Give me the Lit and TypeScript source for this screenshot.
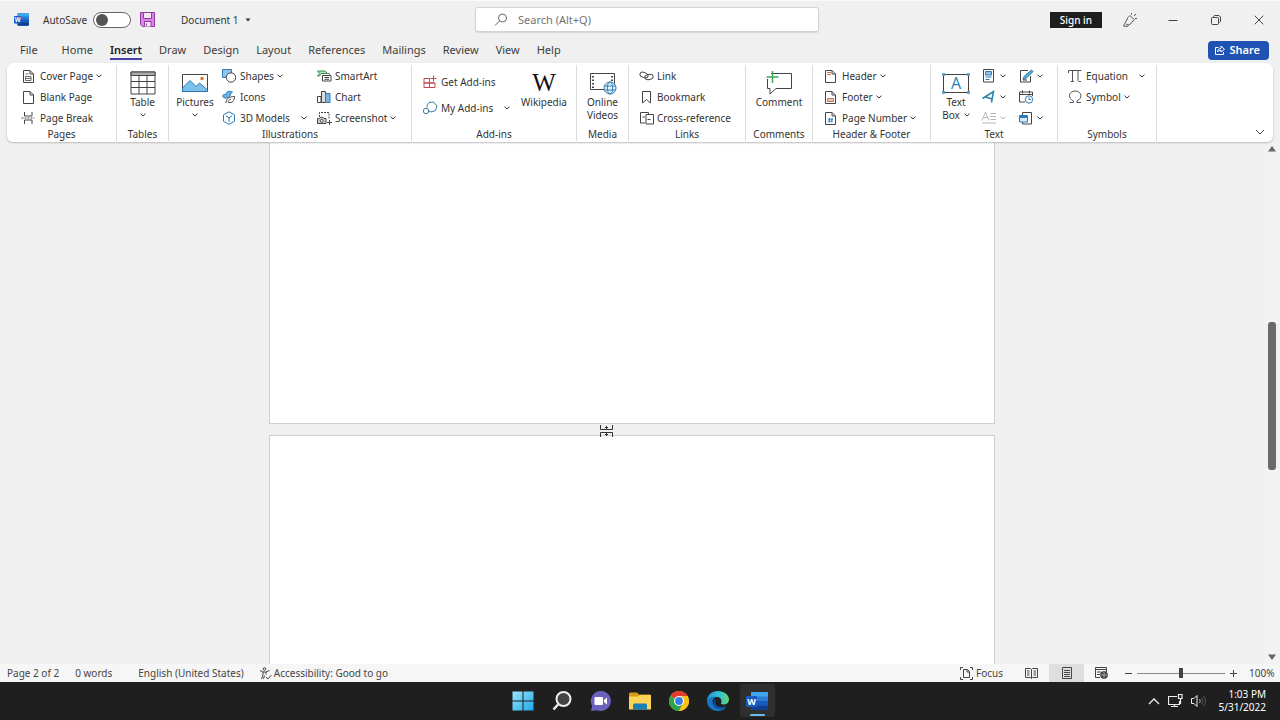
import { LitElement, html, css, svg, nothing, TemplateResult } from "lit";
import { customElement, state } from "lit/decorators.js";

type Art = TemplateResult<2>;

const INK = "#444";
const BLUE = "#2b7cb8";

const icon = (w: number, h: number, art: Art) =>
  html`<svg width=${w} height=${h} viewBox="0 0 ${w} ${h}" fill="none" stroke=${INK} aria-hidden="true">${art}</svg>`;

const sheet = svg`<path d="M2.500 2.500h6.500l3.500 3.500v8.500h-10z M9 2.500v3.500h3.500" fill="#fff"/>`;

const art = {
  coverPage: icon(16, 16, svg`${sheet}<path d="M4.500 6h3M4.500 8.500h5.500v4h-5.500zM4.500 10.500h5.500" stroke-width=".8"/>`),
  blankPage: icon(16, 16, sheet),
  pageBreak: icon(16, 16, svg`<path d="M3.500 2v4h7.500v-4M3.500 14v-4h7.500v4"/><path d="M.5 8h13" stroke-dasharray="2 1"/>`),
  shapes: icon(16, 16, svg`<path d="M1.500 1.500h9v8h-9z" fill="#8fc3ea" stroke=${BLUE}/><circle cx="10" cy="9.500" r="4.700" fill="#fff"/>`),
  icons: icon(16, 16, svg`<path d="M2 8c-1-2 1-3 3-2.500C5 3.500 7 1.500 9 2.500l2.500.5-1.800 1.500C10 7 7.500 9 5 9 3.500 9 2.300 8.700 2 8z" fill="#6eb2e4" stroke=${BLUE}/><path d="M5 14c0-4 3-6.500 8.500-6.500C13.500 12 11 14 8 13.500 6.500 13.300 7 11.500 10 10" fill="#fff"/>`),
  models: icon(16, 16, svg`<path d="M8 1.800l5.500 3v6.500L8 14.300l-5.500-3V4.800z" stroke=${BLUE} fill="#fff"/><path d="M5 6l3 1.800L11 6M8 7.800v4" stroke=${BLUE}/>`),
  smartArt: icon(16, 16, svg`<path d="M1.500 3h7.500l2.500 2.500H5L3.500 8H1.500l2-2.500z" fill="#b8e3c4" stroke="#2e9150"/><path d="M6.500 7.500h8.500v5.500H6.500zM8.500 9.500h4.500M8.500 11.300h4.500" fill="#fff"/><path d="M9 5.500h4.500v2" stroke="#777"/>`),
  chart: icon(16, 16, svg`<path d="M1.500 7.500h3.500v6H1.500z" fill="#fff"/><path d="M5.500 2.500h4v11h-4z" fill="#ddd"/><path d="M9.500 4.500H14v9H9.500z" fill="#7bb6e5" stroke=${BLUE}/>`),
  screenshot: icon(16, 16, svg`<path d="M3.500 7V2.500h9.500v7" stroke-dasharray="2 1"/><path d="M1.500 8.500h2l1-1.200h2.500l1 1.200h2v5h-8.500z" fill="#ccc"/><circle cx="5.700" cy="10.800" r="1.400" fill="#fff"/><path d="M13.500 10v5M11 12.500h5"/>`),
  getAddins: icon(16, 16, svg`<path d="M2 4.500h5.500V9H2zM2 9h5.500v4.500H2zM7.500 9H13v4.500H7.500zM7.500 4.500V9H13M11.500 1.500v6M8.500 4.500h6" stroke="#c2474f"/>`),
  myAddins: icon(16, 16, svg`<path d="M7 2.500l4.500-.5 3.500 4-1.500 4.500-4.500 1.500-2-1M7 2.500L5 5.500v2" stroke="#3b7f9c"/><circle cx="4" cy="11" r="2.700" stroke="#3b7f9c"/>`),
  link: icon(16, 16, svg`<ellipse cx="6" cy="7" rx="4.200" ry="2.500" transform="rotate(20 6 7)"/><ellipse cx="11" cy="9" rx="4.200" ry="2.500" transform="rotate(-10 11 9)"/>`),
  bookmark: icon(16, 16, svg`<path d="M4.500 2.500h8v11.500l-4-3.500-4 3.500z" fill="#fff"/>`),
  crossRef: icon(16, 16, svg`<path d="M7 13H2.500V2.500h8V4M4.500 7H7"/><path d="M8 4.500h7.500v9.500H8zM9.500 9.500h3" fill="#fff"/>`),
  header: icon(16, 16, svg`${sheet}<path d="M4 4.500h4M4 6.500h4" stroke="#c4785a"/>`),
  footer: icon(16, 16, svg`${sheet}<path d="M4.500 9.500h6v3h-6z" fill="#f0c4b2" stroke="#c4785a"/>`),
  pageNumber: icon(16, 16, svg`${sheet}<path d="M6.700 8l-.500 4.500M9.200 8l-.500 4.500M5 9.300h5M4.700 11.200h5" stroke=${BLUE} stroke-width=".9"/>`),
  quickParts: icon(16, 16, svg`<path d="M2.500 1.500h10v12.500h-10z" fill="#fff"/><path d="M4.500 3.500h6v3.500h-6z" fill="#8fc3ea" stroke=${BLUE}/><path d="M4.500 9h6M4.500 11.500h4" stroke=${BLUE}/>`),
  wordArt: icon(16, 16, svg`<path d="M1.500 9.500L12.500 2.500 10.500 13.500M4.500 8l6.500 2" stroke="#2582a8" stroke-width="1.500"/>`),
  dropCap: icon(16, 16, svg`<path d="M1 10.500L4.500 2l3.500 8.500M2.500 7.500h4M9.500 3.500H15M9.500 6.500H15M9.500 9.500H15M1 13h14" stroke="#b5b5b5"/>`),
  signature: icon(16, 16, svg`<path d="M10 2.500H2.500v11.500h10V8" fill="#fff"/><path d="M5 11.500l1-3L13.500 2l1.500 1.500L8 10.500z" fill="#5ba8d6" stroke="#287a9f"/><path d="M5 12h4"/>`),
  dateTime: icon(16, 16, svg`<path d="M7 13H1.500V3h13v4M1.500 5.500h13M4.500 1.500v3M11.500 1.500v3"/><circle cx="11" cy="10.500" r="3.700" stroke=${BLUE} fill="#fff"/><path d="M11 8.500v2h2" stroke=${BLUE}/>`),
  object: icon(16, 16, svg`<path d="M4.500 5V2.500h9v11.500h-9V12"/><path d="M1.500 5.500h8v6.500h-8z" stroke=${BLUE} fill="#d5e9f8"/><path d="M2 7h7.500" stroke=${BLUE} stroke-width="2"/>`),
  equation: icon(16, 16, svg`<path d="M1.500 5V2.500h13M5.500 2.500v11M3.500 13.500h3.500M11 2.500v10q0 1.500 3 1" stroke="#555"/>`),
  symbol: icon(16, 16, svg`<path d="M2.500 13.500h4v-1.500C3.500 10.500 2.500 8.500 2.500 6.700 2.500 4 5 2 8.200 2s5.700 2 5.700 4.700c0 1.800-1 3.800-4 5.300v1.500h4" stroke="#555"/>`),

  table: icon(26, 24, svg`<path d="M1 1h24v22H1z" fill="#fff"/><path d="M1 1h24v3.500H1z" fill="#aaa"/><path d="M1 10.500h24M1 16.500h24M9 4.500v18.500M17 4.500v18.500"/>`),
  pictures: icon(26, 20, svg`<path d="M.5 1.500h25v17H.5z" fill="#fff"/><path d="M.5 15L8 7.500l6 6 3.500-3.500 8 7v1.500H.5z" fill="#7cc0ec" stroke="#2a78ad"/><circle cx="20" cy="5.500" r="1.700" fill="#dd6b3c" stroke="none"/>`),
  wikipedia: html`<svg width="30" height="30" viewBox="0 0 30 30" aria-hidden="true"><text class="wiki" x="15" y="23" text-anchor="middle">W</text></svg>`,
  video: icon(28, 24, svg`<path d="M1.500 2.500h24v16h-24z" fill="#fff"/><path d="M4 5v12M23 5v5" stroke-width="2" stroke-dasharray="1.500 2"/><circle cx="21" cy="17" r="6" fill="#e8f4fc" stroke=${BLUE}/><ellipse cx="21" cy="17" rx="2.700" ry="6" stroke=${BLUE}/><path d="M15.500 15h11M15.500 19h11" stroke=${BLUE}/>`),
  comment: icon(28, 26, svg`<path d="M6 3.500h20.500v15H11l-6 5.500v-5.500H2.500V9" fill="#fff"/><path d="M7.500 1v12M1.500 7h12" stroke="#3fa65c" stroke-width="1.500"/>`),
  textBox: html`<svg width="28" height="22" viewBox="0 0 28 22" fill="none" stroke=${INK} aria-hidden="true"><path d="M1.500 2.500h25v18h-25z" fill="#fff"/><g fill="#7ab8df" stroke="#377fab" stroke-width=".7"><path d="M.5 1.500h2v2h-2zM25.500 1.500h2v2h-2zM.5 19.500h2v2h-2zM25.500 19.500h2v2h-2z"/></g><text class="boxA" x="14" y="17" text-anchor="middle">A</text></svg>`,
};

const caret = html`<svg class="caret" width="6" height="4" viewBox="0 0 6 4" fill="none" stroke="currentColor" aria-hidden="true"><path d="M.5.700L3 3 5.500.700"/></svg>`;

const wordLogo = (s: number) => html`<svg width=${s} height=${s} viewBox="0 0 22 22" aria-hidden="true">
  <rect x="5" y="2" width="17" height="18" rx="1.500" fill="#2b7cd3"/>
  <path d="M5 2h17v4.500H5z" fill="#41a5ee"/><path d="M5 11h17v4.500H5z" fill="#185abd"/><path d="M5 15.500h17v3.500l-1 1H6l-1-1z" fill="#103f91"/>
  <rect x="0" y="6" width="11" height="11" rx="1" fill="#185abd"/>
  <text class="logoW" x="5.500" y="14.500" text-anchor="middle">W</text></svg>`;

type Caret = "" | "near" | "far";
const row = (glyph: unknown, label: string, c: Caret = "") =>
  html`<button class="row"><span class="glyph">${glyph}</span><span>${label}</span>${c ? html`<span class="drop ${c}">${caret}</span>` : nothing}</button>`;
const mini = (glyph: unknown, label: string, c = true, off = false) =>
  html`<button class="mini" aria-label=${label} ?disabled=${off}><span class="glyph">${glyph}</span>${c ? caret : nothing}</button>`;
const big = (glyph: unknown, label: unknown, below = false) =>
  html`<button class="big"><span class="bigGlyph">${glyph}</span><span class="bigLabel">${label}</span>${below ? html`<span class="below">${caret}</span>` : nothing}</button>`;
const group = (name: string, cls: string, body: unknown) =>
  html`<section class="group ${cls}" aria-label=${name}><div class="body">${body}</div><div class="name">${name}</div></section>`;

const TABS = ["File", "Home", "Insert", "Draw", "Design", "Layout", "References", "Mailings", "Review", "View", "Help"];

@customElement("app-root")
export class AppRoot extends LitElement {
  @state() private tab = "Insert";

  static styles = css`
    :host {
      display: flex; flex-direction: column; height: 100vh; overflow: hidden;
      background: #f0f0f0; color: #333;
      font: 10px/14px "Noto Sans", "Open Sans", sans-serif;
    }
    * { box-sizing: border-box; }
    button, input { font: inherit; color: inherit; margin: 0; padding: 0; border: 0; background: none; }
    button { display: flex; align-items: center; white-space: nowrap; }
    svg { display: block; flex: none; }
    .logoW { font: bold 9px "Open Sans", sans-serif; fill: #fff; }
    .wiki { font: 25px "Liberation Serif", serif; fill: #111; stroke: none; }
    .boxA { font: 16px "Open Sans", sans-serif; fill: #2582b5; stroke: none; }

    .title {
      display: grid; grid-template-columns: minmax(0, 1fr) 344px minmax(0, 1fr);
      align-items: center; height: 38px; padding-left: 14px; border-top: 1px solid #fafafa;
    }
    .titleLeft { display: flex; align-items: center; }
    .auto { display: flex; align-items: center; gap: 6px; margin: 0 9px 0 14px; }
    .toggle {
      appearance: none; width: 38px; height: 16px; border: 1px solid #666; border-radius: 8px; background: #fff;
      display: flex; align-items: center; padding-left: 2px;
    }
    .toggle::before { content: ""; width: 12px; height: 12px; border-radius: 50%; background: #555; }
    .docName { gap: 6px; margin-left: 26px; }
    .search {
      display: flex; align-items: center; gap: 10px; height: 25px; padding-left: 18px;
      background: #fff; border: 1px solid #d2d2d2; border-radius: 3px; box-shadow: 0 1px 1px #d8d8d8;
    }
    .search input { flex: 1; min-width: 0; outline: 0; font-size: 11px; }
    .search input::placeholder { color: #737373; opacity: 1; }
    .titleRight { display: flex; justify-content: flex-end; align-items: center; }
    .signIn { height: 16px; padding: 0 10px; margin-right: 6px; background: #1d1d1d; color: #fff; font-weight: 500; }
    .win { width: 43px; height: 30px; justify-content: center; }

    .tabs { display: flex; align-items: center; gap: 1px; height: 24px; padding: 0 11px 0 12px; }
    .tab { position: relative; height: 24px; padding: 0 8px; font-size: 11px; color: #3d3d3d; }
    .tab:first-child { margin-right: 7px; }
    .tab.on { font-weight: 600; color: #222; }
    .tab.on::after { content: ""; position: absolute; left: 8px; right: 8px; bottom: 2px; height: 2px; background: #4740a8; }
    .share { height: 19px; gap: 5px; padding: 0 9px 0 7px; margin-left: auto; background: #2052b3; color: #fff; border-radius: 4px; font-size: 11px; font-weight: 600; }

    .ribbon {
      position: relative; z-index: 1; display: flex; height: 79px; margin: 1px 7px 0; padding: 2px 0 1px;
      background: #fff; border-radius: 6px; box-shadow: 0 1px 2px #bbb;
    }
    .group { display: flex; flex-direction: column; border-right: 1px solid #dcdcdc; flex: none; }
    .body { display: flex; height: 63px; }
    .name { height: 13px; line-height: 13px; text-align: center; }
    .pages { width: 110px; } .pages .body { padding-left: 14px; }
    .tables, .media { width: 52px; }
    .illus { width: 243px; }
    .addins { width: 165px; } .addins .body { padding-left: 10px; }
    .links { width: 117px; } .links .body { padding-left: 9px; }
    .comments { width: 67px; }
    .hf { width: 118px; } .hf .body { padding-left: 10px; }
    .text { width: 127px; }
    .symbols { width: 99px; } .symbols .body { padding-left: 9px; }
    .col { display: flex; flex-direction: column; }
    .wide { width: 95px; }
    .airy { padding-top: 4px; width: 96px; }
    .row { height: 21px; gap: 3px; }
    .airy .row { height: 26px; }
    .glyph { display: flex; width: 16px; }
    .far { margin-left: 8px; }
    .mini { height: 21px; width: 37px; gap: 3px; }
    .mini:disabled { color: #b5b5b5; }
    .big { flex-direction: column; width: 52px; padding-top: 4px; }
    .comments .big, .tables .big, .media .big { width: 100%; }
    .text .big { width: 50px; }
    .bigGlyph { display: flex; align-items: center; justify-content: center; height: 27px; }
    .bigLabel { line-height: 13px; text-align: center; }
    .bigLabel .caret { display: inline-block; margin-left: 4px; vertical-align: 2px; }
    .below { padding-top: 4px; }
    .collapse { margin: auto 8px 6px auto; }

    .doc { flex: 1; min-height: 0; display: flex; position: relative; }
    .canvas { flex: 1; display: flex; flex-direction: column; align-items: center; gap: 11px; }
    .sheet { width: 726px; background: #fff; border: 1px solid #cfcfcf; }
    .first { flex: none; height: 282px; border-top: 0; }
    .second { flex: 1; border-bottom: 0; }
    .cursor { position: absolute; left: 599px; top: 283px; }
    .scroll { width: 16px; display: flex; flex-direction: column; align-items: center; justify-content: space-between; padding: 4px 0; background: #f2f2f2; }
    .track { flex: 1; width: 8px; padding-top: 170px; }
    .thumb { height: 148px; border-radius: 3px; background: #6a6a6a; }

    .status { display: flex; align-items: center; height: 18px; padding: 0 7px; background: #f6f6f6; color: #444; }
    .words { margin: 0 26px 0 16px; }
    .access { gap: 2px; margin-left: 15px; }
    .views { display: flex; align-items: center; margin-left: auto; }
    .focus { gap: 3px; margin-right: 11px; }
    .view { width: 35px; height: 18px; justify-content: center; }
    .view.on { background: #dedede; }
    .zoom { display: flex; align-items: center; gap: 4px; margin-left: 5px; }
    .zoomBtn { width: 9px; justify-content: center; }
    .range { appearance: none; width: 88px; height: 12px; background: linear-gradient(#888, #888) center / 100% 1px no-repeat; }
    .range::-webkit-slider-thumb { appearance: none; width: 4px; height: 10px; background: #444; }
    .pct { width: 24px; margin-left: 7px; }

    .task { display: grid; grid-template-columns: 1fr auto 1fr; height: 38px; background: #1f1f1f; color: #fff; }
    .apps { grid-column: 2; display: flex; }
    .app { position: relative; width: 39px; height: 38px; justify-content: center; }
    .app.on::before { content: ""; position: absolute; inset: 2px 2px 3px; background: #2f2f2f; border-radius: 3px; }
    .app.on::after { content: ""; position: absolute; bottom: 4px; left: 12px; right: 12px; height: 2px; border-radius: 1px; background: #69bce8; }
    .app svg { position: relative; }
    .tray { display: flex; align-items: center; justify-content: flex-end; gap: 8px; padding-right: 14px; }
    .clock { width: 52px; line-height: 13px; display: flex; flex-direction: column; align-items: flex-end; }
  `;

  render() {
    return html`
      <header class="title">
        <div class="titleLeft">
          ${wordLogo(15)}
          <label class="auto">AutoSave<input class="toggle" type="checkbox" role="switch" /></label>
          <button aria-label="Save"><svg width="15" height="15" viewBox="0 0 15 15" fill="#d986e2" stroke="#8f3aa0"><path d="M.5.500h14v14H2.500l-2-2z"/><path d="M3.500.500h8v6h-8z" fill="#f6e6f8"/><path d="M4.500 14.500v-5h6.500v5M6.500 11.500v2" fill="#f6e6f8"/></svg></button>
          <button class="docName">Document 1 <svg width="6" height="4" viewBox="0 0 6 4"><path d="M.5.500h5L3 3.500z" fill="#333"/></svg></button>
        </div>
        <label class="search">
          <svg width="14" height="14" viewBox="0 0 14 14" fill="none" stroke="#666"><circle cx="8.500" cy="5" r="4"/><path d="M5.500 8L1 12.500"/></svg>
          <input type="search" placeholder="Search (Alt+Q)" aria-label="Search" />
        </label>
        <div class="titleRight">
          <button class="signIn">Sign in</button>
          <button class="win" aria-label="Coming soon"><svg width="16" height="16" viewBox="0 0 16 16" fill="none" stroke="#555"><path d="M1.500 14L6 5.500l2-2L12 7.500l-2 3L5 14.500zM4 12l3 1.500M9.500 2.500V1M12 4l2-2M13 6.500h2"/></svg></button>
          <button class="win" aria-label="Minimize"><svg width="10" height="10" viewBox="0 0 10 10" stroke="#444"><path d="M.5 5.500h9"/></svg></button>
          <button class="win" aria-label="Restore"><svg width="10" height="10" viewBox="0 0 10 10" fill="none" stroke="#444"><rect x=".5" y="2.500" width="7" height="7" rx="1"/><path d="M2.500 2.500v-1l1-1h4.500l1.500 1.500v4.500l-1 1h-1"/></svg></button>
          <button class="win" aria-label="Close"><svg width="10" height="10" viewBox="0 0 10 10" stroke="#444"><path d="M.7.700l8.600 8.600M9.300.700L.7 9.300"/></svg></button>
        </div>
      </header>

      <nav class="tabs">
        ${TABS.map((t) => html`<button class="tab ${t === this.tab ? "on" : ""}" @click=${() => (this.tab = t)}>${t}</button>`)}
        <button class="share"><svg width="10" height="10" viewBox="0 0 10 10" fill="none" stroke="#fff"><path d="M3.500 2.500h-3v7h8V7M2.500 7c0-2.500 1.500-3.500 3.500-3.500V1l3.500 3.300L6 7V5.200C4.500 5.200 3.300 5.700 2.500 7z"/></svg>Share</button>
      </nav>

      <div class="ribbon">
        ${group("Pages", "pages", html`<div class="col">${row(art.coverPage, "Cover Page", "near")}${row(art.blankPage, "Blank Page")}${row(art.pageBreak, "Page Break")}</div>`)}
        ${group("Tables", "tables", big(art.table, "Table", true))}
        ${group("Illustrations", "illus", html`${big(art.pictures, "Pictures", true)}
          <div class="col wide">${row(art.shapes, "Shapes", "near")}${row(art.icons, "Icons")}${row(art.models, "3D Models", "far")}</div>
          <div class="col">${row(art.smartArt, "SmartArt")}${row(art.chart, "Chart")}${row(art.screenshot, "Screenshot", "near")}</div>`)}
        ${group("Add-ins", "addins", html`<div class="col airy">${row(art.getAddins, "Get Add-ins")}${row(art.myAddins, "My Add-ins", "far")}</div>${big(art.wikipedia, "Wikipedia")}`)}
        ${group("Media", "media", big(art.video, html`Online<br />Videos`))}
        ${group("Links", "links", html`<div class="col">${row(art.link, "Link")}${row(art.bookmark, "Bookmark")}${row(art.crossRef, "Cross-reference")}</div>`)}
        ${group("Comments", "comments", big(art.comment, "Comment"))}
        ${group("Header & Footer", "hf", html`<div class="col">${row(art.header, "Header", "near")}${row(art.footer, "Footer", "near")}${row(art.pageNumber, "Page Number", "near")}</div>`)}
        ${group("Text", "text", html`${big(art.textBox, html`Text<br />Box${caret}`)}
          <div class="col">${mini(art.quickParts, "Quick Parts")}${mini(art.wordArt, "WordArt")}${mini(art.dropCap, "Drop Cap", true, true)}</div>
          <div class="col">${mini(art.signature, "Signature Line")}${mini(art.dateTime, "Date and Time", false)}${mini(art.object, "Object")}</div>`)}
        ${group("Symbols", "symbols", html`<div class="col">${row(art.equation, "Equation", "far")}${row(art.symbol, "Symbol", "near")}</div>`)}
        <button class="collapse" aria-label="Collapse the ribbon"><svg width="10" height="6" viewBox="0 0 10 6" fill="none" stroke="#444"><path d="M1 1l4 4 4-4"/></svg></button>
      </div>

      <main class="doc">
        <div class="canvas"><div class="sheet first"></div><div class="sheet second"></div></div>
        <svg class="cursor" width="15" height="12" viewBox="0 0 15 12" fill="none" stroke="#333"><path d="M1.500 0v4.500h12V0M1.500 12V7.500h12V12M6 2.500h3M7.500 1v3M6 9.500h3M7.500 8v3"/></svg>
        <div class="scroll">
          <svg width="8" height="6" viewBox="0 0 8 6"><path d="M4 0l4 5.500H0z" fill="#666"/></svg>
          <div class="track"><div class="thumb"></div></div>
          <svg width="8" height="6" viewBox="0 0 8 6"><path d="M0 .5h8L4 6z" fill="#666"/></svg>
        </div>
      </main>

      <footer class="status">
        <span>Page 2 of 2</span><span class="words">0 words</span><span>English (United States)</span>
        <button class="access"><svg width="13" height="13" viewBox="0 0 13 13" fill="none" stroke="#444"><circle cx="5.500" cy="2" r="1.300"/><path d="M1 3.500l3 1.500v3L2.500 12M10.500 3.500L7 5v2.500M4 5h3M5.500 8.500L4.500 12M7 10l1.800 2 3.700-4"/></svg>Accessibility: Good to go</button>
        <div class="views">
          <button class="focus"><svg width="13" height="13" viewBox="0 0 13 13" fill="none" stroke="#444"><path d="M3 .5H.5V3M10 .5h2.500V3M3 12.500H.5V10M10 12.500h2.500V10M3.500 2.500h4l2 2v6h-6zM7 2.500V5h2.500"/></svg>Focus</button>
          <button class="view" aria-label="Read Mode"><svg width="13" height="12" viewBox="0 0 13 12" fill="none" stroke="#444"><path d="M.5 1.500h5l1 1 1-1h5v9h-5l-1 1-1-1h-5zM6.500 2.500v9M2 4h2.500M2 6h2.500M2 8h2.500M8.500 4H11M8.500 6H11M8.500 8H11"/></svg></button>
          <button class="view on" aria-label="Print Layout"><svg width="10" height="12" viewBox="0 0 10 12" fill="none" stroke="#444"><path d="M.5.500h9v11h-9zM2 3.500h6M2 5.500h6M2 7.500h6M2 9.500h6"/></svg></button>
          <button class="view" aria-label="Web Layout"><svg width="13" height="12" viewBox="0 0 13 12" fill="none" stroke="#444"><path d="M5 10.500H.5V.5h11V5M.5 2.500h11M2 5h4M2 7.500h3"/><circle cx="9" cy="8" r="3.500" fill="#444"/><path d="M5.500 8h7M9 4.500v7" stroke="#ccc" stroke-width=".7"/></svg></button>
          <div class="zoom">
            <button class="zoomBtn" aria-label="Zoom out"><svg width="7" height="7" viewBox="0 0 7 7" stroke="#444"><path d="M0 3.500h7"/></svg></button>
            <input class="range" type="range" min="0" max="200" value="100" aria-label="Zoom" />
            <button class="zoomBtn" aria-label="Zoom in"><svg width="7" height="7" viewBox="0 0 7 7" stroke="#444"><path d="M0 3.500h7M3.500 0v7"/></svg></button>
            <span class="pct">100%</span>
          </div>
        </div>
      </footer>

      <div class="task">
        <div class="apps">
          <button class="app" aria-label="Start"><svg width="22" height="20" viewBox="0 0 22 20"><defs><linearGradient id="win" x2="1" y2="1"><stop stop-color="#9be6ff"/><stop offset="1" stop-color="#1ea7e8"/></linearGradient></defs><path d="M.5.500h10v9h-10zM11.500.500h10v9h-10zM.5 10.500h10v9h-10zM11.500 10.500h10v9h-10z" fill="url(#win)"/></svg></button>
          <button class="app" aria-label="Search"><svg width="20" height="20" viewBox="0 0 20 20" fill="#444" stroke="#eee" stroke-width="2"><path d="M6 13.500L1.500 18.500" stroke-width="2.500"/><circle cx="11.500" cy="8" r="7"/></svg></button>
          <button class="app" aria-label="Chat"><svg width="22" height="20" viewBox="0 0 22 20"><path d="M11 0a10 10 0 1 1-4 19.200L1 20l1.200-5A10 10 0 0 1 11 0z" fill="#6c62bd"/><rect x="4.500" y="6" width="8.500" height="8" rx="1" fill="#fff"/><path d="M14 9l3-2.500v7L14 11z" fill="#fff"/></svg></button>
          <button class="app" aria-label="File Explorer"><svg width="22" height="18" viewBox="0 0 22 18"><path d="M0 1.500L1 .5h7l2 2h11l1 1V8H0z" fill="#d99a1c"/><path d="M0 4.500h9L11 3h11v14.500H0z" fill="#fcd354"/><path d="M4 17.500v-5l1-1h12l1 1v5z" fill="#1d7fb8"/></svg></button>
          <button class="app" aria-label="Chrome"><svg width="20" height="20" viewBox="0 0 20 20"><circle cx="10" cy="10" r="10" fill="#fbc116"/><path d="M10 10L1.340 5A10 10 0 0 1 18.660 5z" fill="#e33b2e"/><path d="M10 10L1.340 5A10 10 0 0 0 10 20l4-8z" fill="#2da44e"/><path d="M10 5h8.660A10 10 0 0 1 10 20l4.300-7.500z" fill="#fbc116"/><circle cx="10" cy="10" r="5" fill="#fff"/><circle cx="10" cy="10" r="3.900" fill="#3a7de8"/></svg></button>
          <button class="app" aria-label="Edge"><svg width="22" height="20" viewBox="0 0 22 20"><defs><linearGradient id="edge" x2="1"><stop stop-color="#2494df"/><stop offset=".6" stop-color="#35c4cf"/><stop offset="1" stop-color="#64d96b"/></linearGradient></defs><path d="M0 10C0 4 5 0 11 0s11 4 11 8.500c0 3-2.500 5-5.500 5-2.500 0-3-1-2.200-2C15 8 13 6 9.500 6 5 6 1.500 8 0 10z" fill="url(#edge)"/><path d="M0 10C1 7 5 5 9 6c-3 1-4 4-3 7 1 3.500 5 5.500 9 4.500l4-1.500c-2 3-5 4-8 4C5 20 0 16 0 10z" fill="#1876c8"/><path d="M9 8c-2 4 0 8 5 8 2 0 4-.5 5-1-1.500 4-8 4.500-11 1.500C5.500 13.500 6.500 9.500 9 8z" fill="#124f9c"/></svg></button>
          <button class="app on" aria-label="Word">${wordLogo(22)}</button>
        </div>
        <div class="tray">
          <svg width="12" height="7" viewBox="0 0 12 7" fill="none" stroke="#eee" stroke-width="1.300"><path d="M1 6l5-5 5 5"/></svg>
          <svg width="15" height="14" viewBox="0 0 15 14" fill="none" stroke="#eee"><path d="M9 2.500H.5v8h11V7M3 12.500h7M6.500 10.500v2M10.500.500h3.500v4h-3.500zM12.500 4.500V10" stroke-width="1.200"/></svg>
          <svg width="15" height="14" viewBox="0 0 15 14" fill="none" stroke="#eee"><path d="M.5 4.500h2.500l3-3v11l-3-3H.5z"/><path d="M8.500 5q1.500 2 0 4" stroke="#aaa"/><path d="M10.500 3.500q3 3.500 0 7M12.500 2q4 5 0 10" stroke="#555"/></svg>
          <div class="clock"><span>1:03 PM</span><span>5/31/2022</span></div>
        </div>
      </div>
    `;
  }
}
